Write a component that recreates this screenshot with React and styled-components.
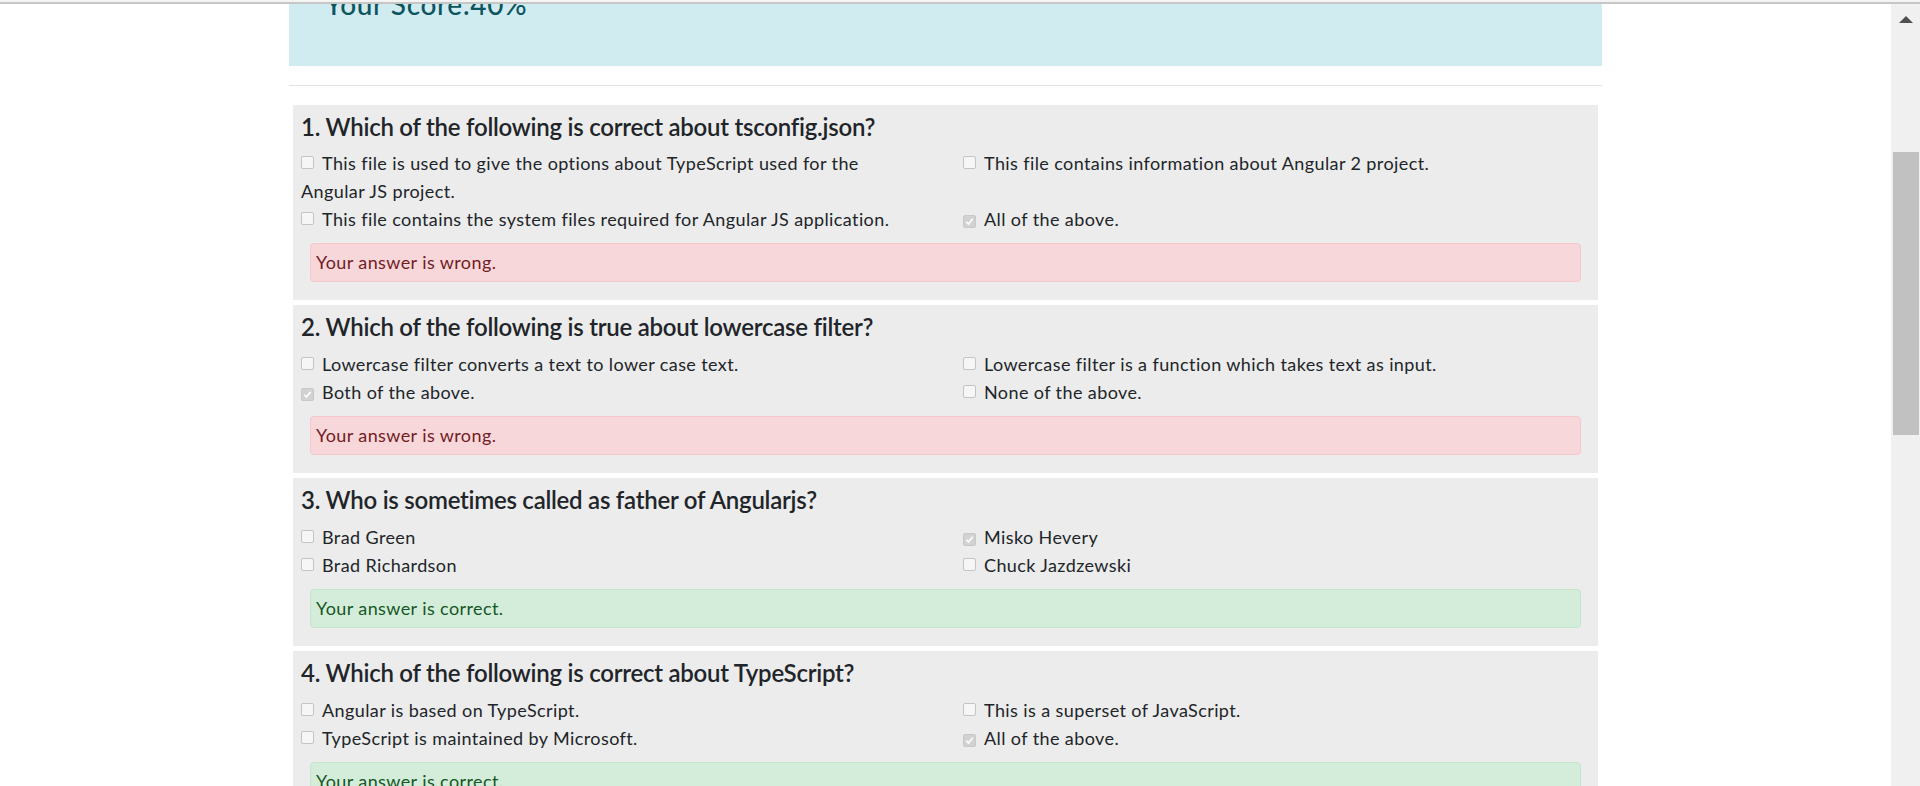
import React from "react";
import styled, { createGlobalStyle } from "styled-components";

const GlobalStyle = createGlobalStyle`
  html, body {
    margin: 0;
    padding: 0;
    height: 100%;
    overflow: hidden;
    background: #fff;
  }
  body {
    font-family: Lato, "Noto Sans", sans-serif;
    color: #212529;
  }
`;

const Window = styled.div`
  height: 786px;
  display: flex;
  flex-direction: column;
  overflow: hidden;
`;

const TopEdge = styled.div`
  height: 2px;
  border-bottom: 2px solid #c6c6c6;
  background: #f4f4f4;
`;

const Viewport = styled.div`
  flex: 1;
  min-height: 0;
  display: flex;
`;

const Page = styled.div`
  flex: 1;
  overflow: hidden;
`;

const Container = styled.div`
  width: 1313px;
  margin: 0 auto;
`;

const ScoreBox = styled.div`
  margin-top: -36px;
  padding: 20px 36px 44px;
  background: #d1ecf1;
  color: #0c5460;
`;

const ScoreTitle = styled.h3`
  margin: 0;
  font-size: 28px;
  font-weight: 500;
  line-height: 1.2;
  letter-spacing: 0.6px;
`;

const Divider = styled.hr`
  border: 0;
  border-top: 1px solid #e2e2e2;
  margin: 19px 0;
`;

const QuestionList = styled.div`
  display: flex;
  flex-direction: column;
  gap: 5px;
  padding: 0 4px;
`;

const QuestionCard = styled.div`
  background: #ececec;
  padding: 8px 8px 18px;
`;

const QuestionTitle = styled.h4`
  margin: 0 0 8px;
  font-size: 24px;
  font-weight: 600;
  line-height: 28.8px;
  letter-spacing: -0.25px;
  color: #212529;
`;

const OptionGrid = styled.div`
  display: grid;
  grid-template-columns: 600px 1fr;
  column-gap: 62px;
  font-size: 18px;
  line-height: 28px;
  letter-spacing: 0.4px;
  color: #212529;
`;

const Option = styled.div``;

const Box = styled.span`
  display: inline-flex;
  align-items: center;
  justify-content: center;
  box-sizing: border-box;
  width: 13px;
  height: 13px;
  margin: 0 8px 1px 0;
  border: 1px solid ${(p) => (p.$checked ? "#c8c8c8" : "#c4c4c4")};
  border-radius: 2px;
  background: ${(p) => (p.$checked ? "#d2d2d2" : "#f6f6f6")};
  vertical-align: baseline;
`;

const Feedback = styled.div`
  margin: 10px 9px 0;
  padding: 5px 5px;
  border: 1px solid ${(p) => (p.$ok ? "#c3e6cb" : "#f5c6cb")};
  border-radius: 4px;
  background: ${(p) => (p.$ok ? "#d4edda" : "#f8d7da")};
  color: ${(p) => (p.$ok ? "#155724" : "#721c24")};
  font-size: 18px;
  line-height: 27px;
  letter-spacing: 0.4px;
`;

const ScrollTrack = styled.div`
  width: 29px;
  background: #f0f0f0;
  display: flex;
  flex-direction: column;
`;

const ScrollArrow = styled.div`
  width: 0;
  height: 0;
  margin: 12px auto 0;
  border-left: 7px solid transparent;
  border-right: 7px solid transparent;
  border-bottom: 7px solid #505050;
`;

const ScrollThumb = styled.div`
  margin: 129px 1px 0 2px;
  height: 283px;
  background: #c1c1c1;
`;

const questions = [
  {
    title: "Which of the following is correct about tsconfig.json?",
    options: [
      "This file is used to give the options about TypeScript used for the Angular JS project.",
      "This file contains information about Angular 2 project.",
      "This file contains the system files required for Angular JS application.",
      "All of the above.",
    ],
    picked: 3,
    correct: false,
  },
  {
    title: "Which of the following is true about lowercase filter?",
    options: [
      "Lowercase filter converts a text to lower case text.",
      "Lowercase filter is a function which takes text as input.",
      "Both of the above.",
      "None of the above.",
    ],
    picked: 2,
    correct: false,
  },
  {
    title: "Who is sometimes called as father of Angularjs?",
    options: ["Brad Green", "Misko Hevery", "Brad Richardson", "Chuck Jazdzewski"],
    picked: 1,
    correct: true,
  },
  {
    title: "Which of the following is correct about TypeScript?",
    options: [
      "Angular is based on TypeScript.",
      "This is a superset of JavaScript.",
      "TypeScript is maintained by Microsoft.",
      "All of the above.",
    ],
    picked: 3,
    correct: true,
  },
];

const Check = ({ checked }) => (
  <Box $checked={checked}>
    {checked && (
      <svg width="9" height="9" viewBox="0 0 9 9">
        <path d="M1.3 4.8 L3.5 7 L7.7 1.8" fill="none" stroke="#fff" strokeWidth="1.6" />
      </svg>
    )}
  </Box>
);

const App = () => {
  return (
    <>
      <GlobalStyle />
      <Window>
        <TopEdge />
        <Viewport>
          <Page>
            <Container>
              <ScoreBox>
                <ScoreTitle>Your Score:40%</ScoreTitle>
              </ScoreBox>
              <Divider />
              <QuestionList>
                {questions.map((q, i) => (
                  <QuestionCard key={i}>
                    <QuestionTitle>
                      {i + 1}. {q.title}
                    </QuestionTitle>
                    <OptionGrid>
                      {q.options.map((opt, j) => (
                        <Option key={j}>
                          <Check checked={q.picked === j} />
                          {opt}
                        </Option>
                      ))}
                    </OptionGrid>
                    <Feedback $ok={q.correct}>
                      {q.correct ? "Your answer is correct." : "Your answer is wrong."}
                    </Feedback>
                  </QuestionCard>
                ))}
              </QuestionList>
            </Container>
          </Page>
          <ScrollTrack>
            <ScrollArrow />
            <ScrollThumb />
          </ScrollTrack>
        </Viewport>
      </Window>
    </>
  );
};

export default App;
